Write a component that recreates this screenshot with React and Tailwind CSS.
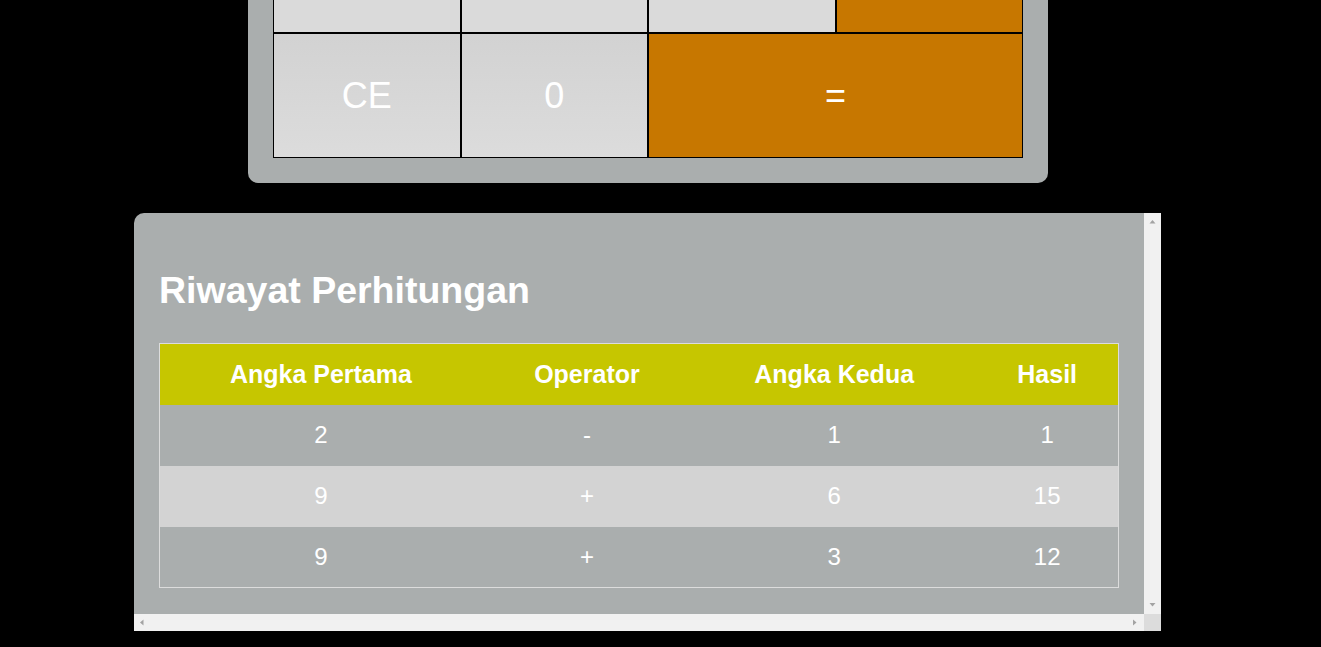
import React from "react";

const font = { fontFamily: '"Liberation Sans", Arial, sans-serif' };

const rows = [
  ["2", "-", "1", "1"],
  ["9", "+", "6", "15"],
  ["9", "+", "3", "12"],
];

function Tri({ dir }) {
  const pts = {
    up: "0.5,4.5 3.5,1 6.5,4.5",
    down: "0.5,1 3.5,4.5 6.5,1",
    left: "4.5,0.5 1,3.5 4.5,6.5",
    right: "1,0.5 4.5,3.5 1,6.5",
  }[dir];
  const vertical = dir === "up" || dir === "down";
  return (
    <svg width={vertical ? 7 : 6} height={vertical ? 6 : 7} viewBox={vertical ? "0 0 7 6" : "0 0 6 7"}>
      <polygon points={pts} fill="#a3a3a3" />
    </svg>
  );
}

export default function App() {
  return (
    <div className="min-h-screen bg-black" style={font}>
      <div className="w-[1296px] flex flex-col">
        {/* Calculator card (top cut off) */}
        <div className="ml-[248px] w-[800px] bg-[#aaaeae] rounded-b-[10px] px-[25px] pb-[25px]">
          <div className="grid grid-cols-4 grid-rows-[33px_125px]">
            <div className="bg-[#dadada] border-x border-b border-black" />
            <div className="bg-[#dadada] border-x border-b border-black" />
            <div className="bg-[#dadada] border-x border-b border-black" />
            <div className="bg-[#c77700] border-x border-b border-black" />
            <div className="bg-gradient-to-b from-[#d2d2d2] to-[#dcdcdc] border border-black flex items-center justify-center text-white text-[36px]">
              CE
            </div>
            <div className="bg-gradient-to-b from-[#d2d2d2] to-[#dcdcdc] border border-black flex items-center justify-center text-white text-[36px]">
              0
            </div>
            <div className="col-span-2 bg-[#c77700] border border-black flex items-center justify-center text-white text-[36px]">
              =
            </div>
          </div>
        </div>

        {/* History panel */}
        <div className="ml-[134px] mt-[30px] w-[1027px] h-[418px] bg-[#aaaeae] rounded-tl-[10px] flex flex-col overflow-hidden">
          <div className="flex flex-1 min-h-0">
            <div className="flex-1 p-[25px]">
              <h2 className="text-white font-bold text-[37.5px] leading-[42px] mt-[31px] mb-[32px]">
                Riwayat Perhitungan
              </h2>
              <table className="w-[960px] table-fixed border-collapse border border-[#dcdcdc]">
                <colgroup>
                  <col className="w-[322px]" />
                  <col className="w-[210px]" />
                  <col className="w-[284px]" />
                  <col className="w-[142px]" />
                </colgroup>
                <thead>
                  <tr className="bg-[#c6c600] h-[61px]">
                    <th className="text-white font-bold text-[25px] text-center p-0">Angka Pertama</th>
                    <th className="text-white font-bold text-[25px] text-center p-0">Operator</th>
                    <th className="text-white font-bold text-[25px] text-center p-0">Angka Kedua</th>
                    <th className="text-white font-bold text-[25px] text-center p-0">Hasil</th>
                  </tr>
                </thead>
                <tbody>
                  {rows.map((r, i) => (
                    <tr key={i} className={i === 1 ? "bg-[#d3d3d3] h-[61px]" : "h-[61px]"}>
                      {r.map((c, j) => (
                        <td key={j} className="text-white text-[24px] text-center p-0">
                          {c}
                        </td>
                      ))}
                    </tr>
                  ))}
                </tbody>
              </table>
            </div>
            <div className="w-[17px] bg-[#f1f1f1] flex flex-col items-center justify-between pt-[6px] pb-[6px]">
              <Tri dir="up" />
              <Tri dir="down" />
            </div>
          </div>
          <div className="h-[17px] flex">
            <div className="flex-1 bg-[#f1f1f1] flex items-center justify-between pl-[5px] pr-[6px]">
              <Tri dir="left" />
              <Tri dir="right" />
            </div>
            <div className="w-[17px] bg-[#dcdcdc]" />
          </div>
        </div>
      </div>
    </div>
  );
}
